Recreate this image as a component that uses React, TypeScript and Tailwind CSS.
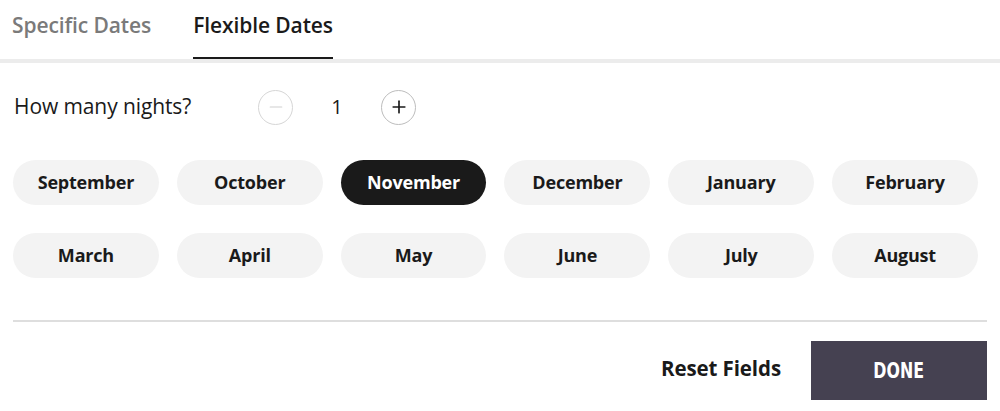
import { Minus, Plus } from "lucide-react";

const months = [
  "September",
  "October",
  "November",
  "December",
  "January",
  "February",
  "March",
  "April",
  "May",
  "June",
  "July",
  "August",
];

export default function App() {
  const selected = "November";

  return (
    <div className="w-[1000px] h-[411px] bg-white font-['Open_Sans',sans-serif] text-[#1a1a1a]">
      {/* Tabs */}
      <div className="flex items-end h-[59px] pl-3 gap-[42px]">
        <button className="h-[58px] pb-[10px] text-[21px] font-semibold text-[#7a7a7a] leading-6 tracking-[-0.1px]">
          Specific Dates
        </button>
        <button className="h-[58px] pb-[8px] text-[21px] font-semibold text-[#1a1a1a] leading-6 tracking-[-0.1px] border-b-2 border-[#1a1a1a]">
          Flexible Dates
        </button>
      </div>
      <div className="h-1 bg-[#ececec]" />

      <div className="px-[13px]">
        {/* Nights */}
        <div className="flex items-center h-9 mt-[26px]">
          <span className="w-[245px] text-[21px] pl-px tracking-[-0.1px]">How many nights?</span>
          <button className="w-[35px] h-[35px] rounded-full border border-[#d6d6d6] flex items-center justify-center">
            <Minus className="w-5 h-5 text-[#d0d0d0]" strokeWidth={1.25} />
          </button>
          <span className="w-[88px] text-center text-[20px]">1</span>
          <button className="w-[35px] h-[35px] rounded-full border border-[#bdbdbd] flex items-center justify-center">
            <Plus className="w-5 h-5 text-[#1a1a1a]" strokeWidth={2} />
          </button>
        </div>

        {/* Months */}
        <div className="grid grid-cols-6 gap-x-[18px] gap-y-[28px] w-[965px] mt-[35px]">
          {months.map((m) => (
            <button
              key={m}
              className={
                m === selected
                  ? "h-[45px] rounded-full bg-[#1a1a1a] text-white text-[18px] font-bold tracking-[-0.2px]"
                  : "h-[45px] rounded-full bg-[#f3f3f3] text-[#1a1a1a] text-[18px] font-bold tracking-[-0.2px]"
              }
            >
              {m}
            </button>
          ))}
        </div>

        <div className="h-[2px] bg-[#dedede] mt-[42px]" />

        {/* Footer */}
        <div className="flex justify-end items-center gap-[30px] mt-[19px]">
          <button className="text-[20.5px] font-bold text-[#1a1a1a] tracking-[-0.1px] -mt-1">Reset Fields</button>
          <button className="w-[176px] h-[59px] bg-[#454151] text-white text-[22px] font-bold font-['DejaVu_Sans_Condensed','DejaVu_Sans',sans-serif]">
            <span className="inline-block scale-x-[0.8]">DONE</span>
          </button>
        </div>
      </div>
    </div>
  );
}
